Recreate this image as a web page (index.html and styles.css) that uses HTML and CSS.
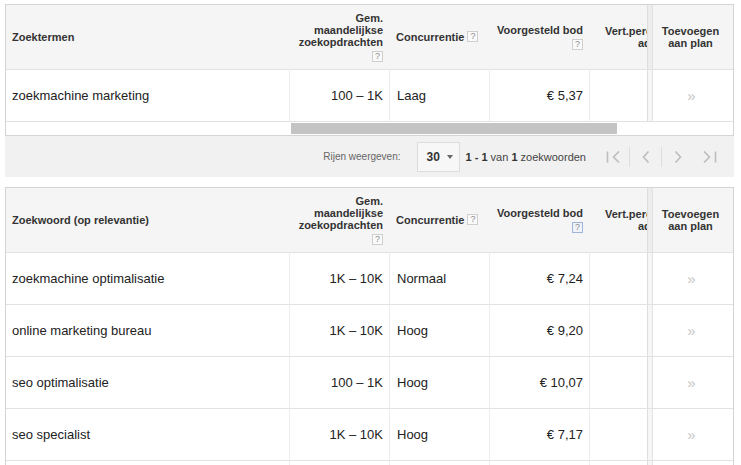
FILE: index.html
```html
<!DOCTYPE html>
<html lang="nl">
<head>
<meta charset="utf-8">
<title>Zoekwoordplanner</title>
<link rel="stylesheet" href="styles.css">
</head>
<body>
<div class="page">
  <div class="table">
    <div class="grid">
      <div class="cell head left">Zoektermen</div>
      <div class="cell head right"><div>Gem.<br>maandelijkse<br>zoekopdrachten<br><span class="q q-below">?</span></div></div>
      <div class="cell head left">Concurrentie <span class="q q-inline">?</span></div>
      <div class="cell head right"><div>Voorgesteld bod<br><span class="q q-below">?</span></div></div>
      <div class="cell head clip"><div class="cliptext"><span class="l1">Vert.perc.</span><span class="l2">advertentie</span></div></div>
      <div class="cell head center sticky">Toevoegen<br>aan plan</div>

      <div class="cell row left">zoekmachine marketing</div>
      <div class="cell row right">100 – 1K</div>
      <div class="cell row left pl">Laag</div>
      <div class="cell row right">€ 5,37</div>
      <div class="cell row"></div>
      <div class="cell row center sticky add">»</div>
    </div>
    <div class="scrollrow">
      <div class="scrollfrozen"></div>
      <div class="scrolltrack"><div class="thumb"></div></div>
    </div>
  </div>

  <div class="footer">
    <span class="label">Rijen weergeven:</span>
    <div class="select"><b>30</b><span class="caret"></span></div>
    <span class="range"><b>1 - 1</b> van <b>1</b> zoekwoorden</span>
    <div class="pager">
      <span class="pbtn"><svg width="15" height="12" viewBox="0 0 15 12"><path d="M1.5 0.5V11.5M13 0.5L7.5 6L13 11.5" fill="none" stroke="#bdbdbd" stroke-width="1.6"/></svg></span>
      <span class="psep"></span>
      <span class="pbtn"><svg width="8" height="12" viewBox="0 0 8 12"><path d="M6.5 0.5L1.5 6L6.5 11.5" fill="none" stroke="#bdbdbd" stroke-width="1.6"/></svg></span>
      <span class="psep"></span>
      <span class="pbtn"><svg width="8" height="12" viewBox="0 0 8 12"><path d="M1.5 0.5L6.5 6L1.5 11.5" fill="none" stroke="#bdbdbd" stroke-width="1.6"/></svg></span>
      <span class="psep none"></span>
      <span class="pbtn"><svg width="15" height="12" viewBox="0 0 15 12"><path d="M2 0.5L7.5 6L2 11.5M13.5 0.5V11.5" fill="none" stroke="#bdbdbd" stroke-width="1.6"/></svg></span>
    </div>
  </div>

  <div class="table t2">
    <div class="grid">
      <div class="cell head left">Zoekwoord (op relevantie)</div>
      <div class="cell head right"><div>Gem.<br>maandelijkse<br>zoekopdrachten<br><span class="q q-below">?</span></div></div>
      <div class="cell head left">Concurrentie <span class="q q-inline">?</span></div>
      <div class="cell head right"><div>Voorgesteld bod<br><span class="q q-below q-hover">?</span></div></div>
      <div class="cell head clip"><div class="cliptext"><span class="l1">Vert.perc.</span><span class="l2">advertentie</span></div></div>
      <div class="cell head center sticky">Toevoegen<br>aan plan</div>

      <div class="cell row left">zoekmachine optimalisatie</div>
      <div class="cell row right">1K – 10K</div>
      <div class="cell row left pl">Normaal</div>
      <div class="cell row right">€ 7,24</div>
      <div class="cell row"></div>
      <div class="cell row center sticky add">»</div>

      <div class="cell row left">online marketing bureau</div>
      <div class="cell row right">1K – 10K</div>
      <div class="cell row left pl">Hoog</div>
      <div class="cell row right">€ 9,20</div>
      <div class="cell row"></div>
      <div class="cell row center sticky add">»</div>

      <div class="cell row left">seo optimalisatie</div>
      <div class="cell row right">100 – 1K</div>
      <div class="cell row left pl">Hoog</div>
      <div class="cell row right">€ 10,07</div>
      <div class="cell row"></div>
      <div class="cell row center sticky add">»</div>

      <div class="cell row left">seo specialist</div>
      <div class="cell row right">1K – 10K</div>
      <div class="cell row left pl">Hoog</div>
      <div class="cell row right">€ 7,17</div>
      <div class="cell row"></div>
      <div class="cell row center sticky add">»</div>

      <div class="cell row left">seo bureau</div>
      <div class="cell row right">1K – 10K</div>
      <div class="cell row left pl">Hoog</div>
      <div class="cell row right">€ 8,02</div>
      <div class="cell row"></div>
      <div class="cell row center sticky add">»</div>
    </div>
  </div>
</div>
</body>
</html>
```

FILE: styles.css
```css
html, body {
  margin: 0;
  padding: 0;
  height: 465px;
  overflow: hidden;
  background: #ffffff;
}

.page {
  padding: 4px 0 0 5px;
  font-family: "Liberation Sans", Arial, sans-serif;
  color: #222222;
}

.table {
  width: 727px;
  border: 1px solid #d4d4d4;
  background: #ffffff;
}

.t2 {
  margin-top: 10px;
  border-bottom: none;
}

.grid {
  display: grid;
  grid-template-columns: 284px 100px 100px 100px 58px 85px;
}

.cell {
  box-sizing: border-box;
  display: flex;
  align-items: center;
  border-right: 1px solid #ececec;
  border-bottom: 1px solid #e2e2e2;
  padding: 0 6px;
  min-width: 0;
}

.cell:nth-child(6n) {
  border-right: none;
}

.head {
  height: 65px;
  background: #f5f5f5;
  font-size: 11px;
  font-weight: bold;
  line-height: 12px;
  color: #333333;
  border-right-color: #f5f5f5;
}

.head:nth-child(5) {
  border-right-color: #dedede;
}

.row {
  height: 52px;
  font-size: 13px;
  color: #222222;
}

.row:nth-child(6n+5) {
  border-right-color: #dedede;
}

.left {
  justify-content: flex-start;
}

.pl {
  padding-left: 7px;
}

.right {
  justify-content: flex-end;
  text-align: right;
}

.center {
  justify-content: center;
  text-align: center;
}

.sticky {
  background-image: linear-gradient(to right, rgba(0, 0, 0, 0.035) 0, rgba(0, 0, 0, 0.035) 4px, #e2e2e2 4px, #e2e2e2 5px, transparent 5px);
}

.add {
  color: #c6c6c6;
  font-size: 15px;
  padding-left: 8px;
}

.clip {
  overflow: hidden;
  padding: 0;
}

.cliptext {
  display: flex;
  flex-direction: column;
  white-space: nowrap;
}

.l1 {
  margin-left: 15px;
}

.l2 {
  margin-left: 48px;
}

.q {
  display: inline-block;
  box-sizing: border-box;
  width: 11px;
  height: 11px;
  border: 1px solid #cfcfcf;
  background: #fafafa;
  color: #8a8a8a;
  font-size: 9px;
  font-weight: normal;
  line-height: 9px;
  text-align: center;
  vertical-align: middle;
}

.q-below {
  margin-top: 2px;
}

.q-inline {
  margin-left: 3px;
  margin-top: -2px;
}

.q-hover {
  border-color: #9fb4d8;
  background: #eef3fb;
}

.scrollrow {
  display: flex;
  height: 13px;
}

.scrollfrozen {
  width: 284px;
  flex: none;
}

.scrolltrack {
  flex: 1;
  padding: 1px 0 1px 1px;
}

.thumb {
  width: 326px;
  height: 11px;
  background: #c4c4c4;
}

.footer {
  width: 729px;
  height: 41px;
  background: #f1f1f1;
  display: flex;
  align-items: center;
  justify-content: flex-end;
  font-size: 11px;
  color: #555555;
  box-sizing: border-box;
  padding-right: 9px;
}

.label {
  color: #666666;
  font-size: 10px;
}

.select {
  width: 43px;
  height: 30px;
  box-sizing: border-box;
  margin-left: 16px;
  border: 1px solid #dcdcdc;
  background: #f7f7f7;
  display: flex;
  align-items: center;
  padding-left: 9px;
  gap: 7px;
  color: #333333;
  font-size: 12px;
}

.caret {
  width: 0;
  height: 0;
  border-left: 3.5px solid transparent;
  border-right: 3.5px solid transparent;
  border-top: 4px solid #666666;
}

.range {
  margin-left: 6px;
  color: #444444;
  font-size: 11px;
}

.range b {
  color: #333333;
}

.pager {
  display: flex;
  align-items: center;
  margin-left: 12px;
}

.pbtn {
  width: 31px;
  height: 24px;
  display: flex;
  align-items: center;
  justify-content: center;
}

.psep {
  width: 1px;
  height: 20px;
  background: #dddddd;
}

.psep.none {
  background: transparent;
}
```
